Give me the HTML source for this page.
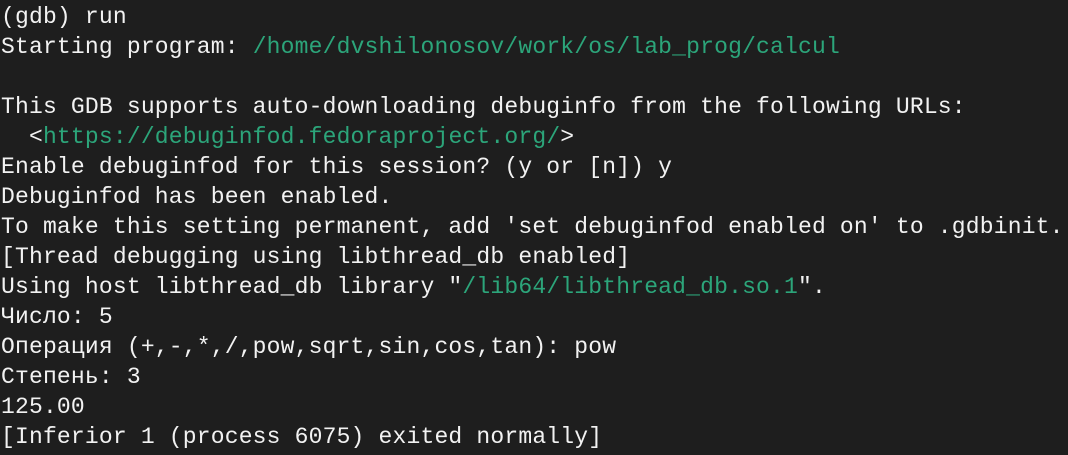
<!DOCTYPE html>
<html><head><style>
html,body{margin:0;padding:0;background:#1e1e1e;width:1068px;height:455px;overflow:hidden}
pre{margin:0;padding:2px 0 0 1px;font-family:"Liberation Mono","DejaVu Sans Mono",monospace;font-size:23px;line-height:30px;color:#f2f2f2;letter-spacing:0.18px}
.g{color:#2ca57a}
</style></head><body><pre>(gdb) run
Starting program: <span class="g">/home/dvshilonosov/work/os/lab_prog/calcul</span>

This GDB supports auto-downloading debuginfo from the following URLs:
  &lt;<span class="g">https://debuginfod.fedoraproject.org/</span>&gt;
Enable debuginfod for this session? (y or [n]) y
Debuginfod has been enabled.
To make this setting permanent, add 'set debuginfod enabled on' to .gdbinit.
[Thread debugging using libthread_db enabled]
Using host libthread_db library "<span class="g">/lib64/libthread_db.so.1</span>".
Число: 5
Операция (+,-,*,/,pow,sqrt,sin,cos,tan): pow
Степень: 3
125.00
[Inferior 1 (process 6075) exited normally]
</pre></body></html>
